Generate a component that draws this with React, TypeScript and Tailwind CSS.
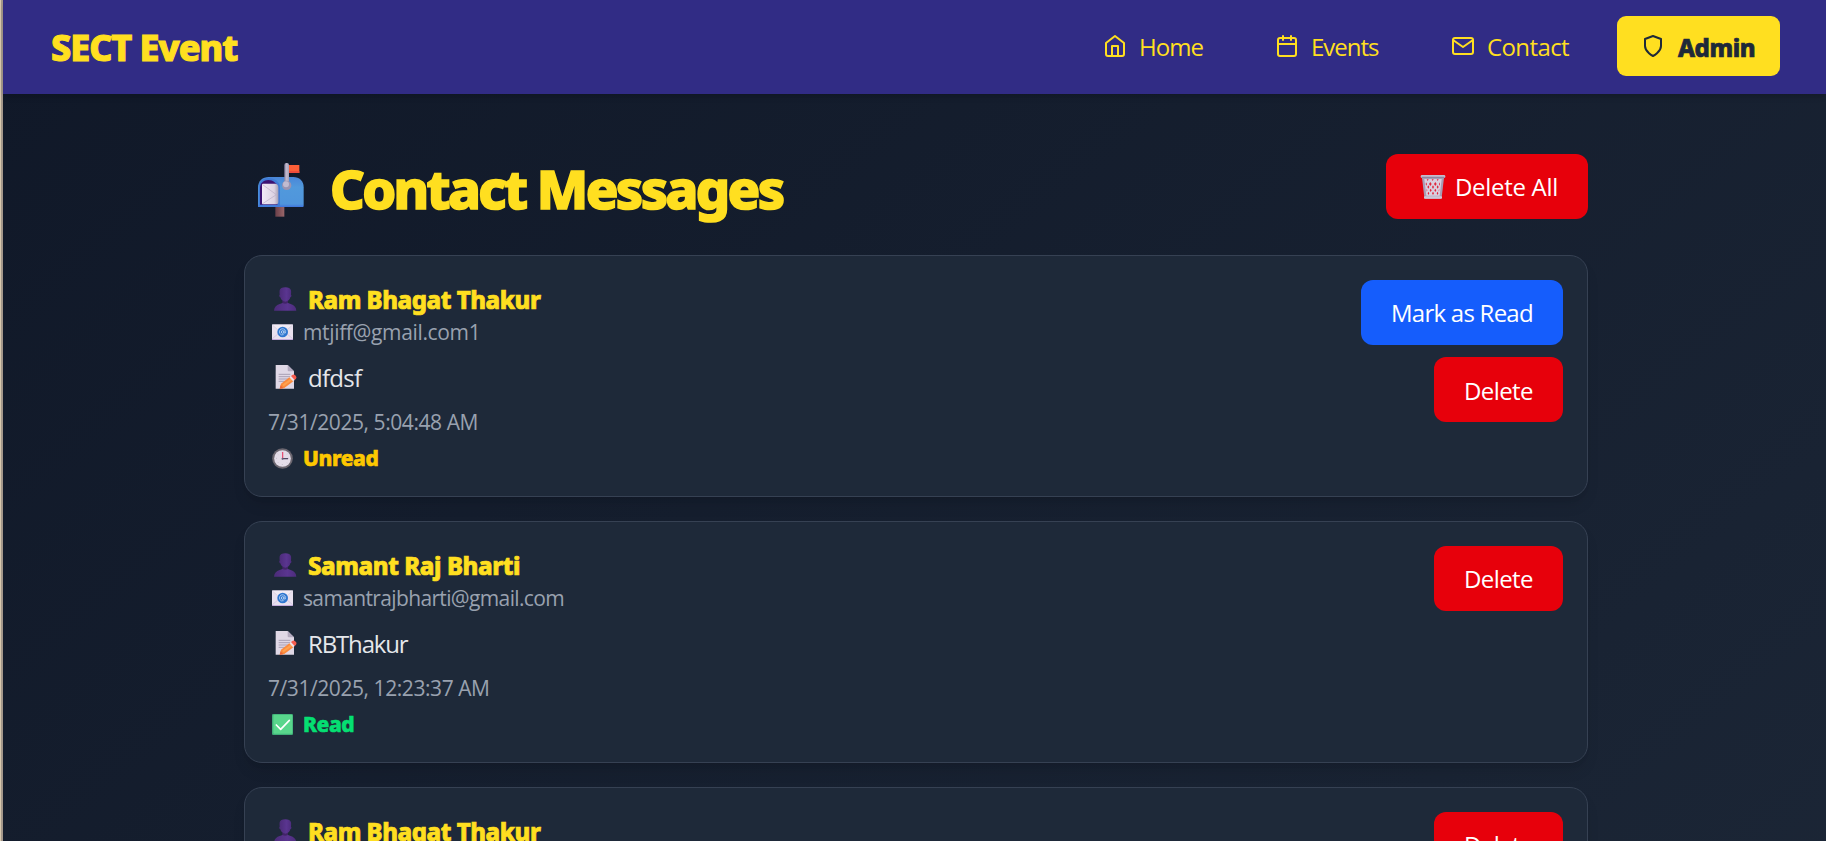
import type { ReactNode } from "react";

const stroke = {
  fill: "none",
  stroke: "currentColor",
  strokeWidth: 2,
  strokeLinecap: "round" as const,
  strokeLinejoin: "round" as const,
};

function HomeIcon() {
  return (
    <svg className="size-6 shrink-0" viewBox="0 0 24 24" {...stroke}>
      <path d="M3 9l9-7 9 7v11a2 2 0 0 1-2 2H5a2 2 0 0 1-2-2z" />
      <path d="M9 22V12h6v10" />
    </svg>
  );
}

function CalendarIcon() {
  return (
    <svg className="size-6 shrink-0" viewBox="0 0 24 24" {...stroke}>
      <rect x="3" y="4" width="18" height="18" rx="2" />
      <path d="M16 2v4M8 2v4M3 10h18" />
    </svg>
  );
}

function MailIcon() {
  return (
    <svg className="size-6 shrink-0" viewBox="0 0 24 24" {...stroke}>
      <path d="M4 4h16c1.1 0 2 .9 2 2v12c0 1.1-.9 2-2 2H4c-1.1 0-2-.9-2-2V6c0-1.1.9-2 2-2z" />
      <path d="M22 6l-10 7L2 6" />
    </svg>
  );
}

function ShieldIcon() {
  return (
    <svg className="size-6 shrink-0" viewBox="0 0 24 24" {...stroke}>
      <path d="M12 22s8-4 8-10V5l-8-3-8 3v7c0 6 8 10 8 10z" />
    </svg>
  );
}

function Mailbox() {
  return (
    <svg className="h-14 w-12 shrink-0" viewBox="21 21 144 168">
      <defs>
        <linearGradient id="mb-body" x1="0" y1="0" x2="0" y2="1">
          <stop offset="0" stopColor="#4a86d8" />
          <stop offset=".35" stopColor="#5199dc" />
          <stop offset=".9" stopColor="#4f95dc" />
          <stop offset="1" stopColor="#3f74dc" />
        </linearGradient>
        <linearGradient id="mb-post" x1="0" y1="0" x2="1" y2="0">
          <stop offset="0" stopColor="#6a3f49" />
          <stop offset="1" stopColor="#9a666a" />
        </linearGradient>
        <linearGradient id="mb-pole" x1="0" y1="0" x2="1" y2="0">
          <stop offset="0" stopColor="#8d86a5" />
          <stop offset=".5" stopColor="#c3bccf" />
          <stop offset="1" stopColor="#a79fb8" />
        </linearGradient>
        <linearGradient id="mb-env" x1="0" y1="0" x2="1" y2="0">
          <stop offset="0" stopColor="#f1e9f6" />
          <stop offset=".75" stopColor="#dcd2e2" />
          <stop offset="1" stopColor="#a79fb4" />
        </linearGradient>
      </defs>
      <rect x="76" y="152" width="27" height="33" fill="url(#mb-post)" />
      <path d="M24 156V98c0-20 14-32 32-32h74c18 0 31 12 31 30v57c0 2-1 3-3 3z" fill="url(#mb-body)" />
      <path d="M26 153V98c0-18 13-29 30-29s34 11 34 29v55z" fill="#3f7bd6" />
      <path d="M30 149V99c0-15 11-24 25-24s27 9 27 24v50z" fill="#3c1172" />
      <path d="M36 89q0-3 3-3h38q8 2 8 12v44q0 6-6 6H39q-3 0-3-3z" fill="url(#mb-env)" />
      <path d="M38 89l41 30-41 27" fill="none" stroke="#b9aec5" strokeWidth="2" />
      <rect x="114" y="30" width="34" height="24" fill="#fc5f38" />
      <rect x="114" y="48" width="34" height="6" fill="#ee4c3c" />
      <rect x="103" y="24" width="14" height="68" rx="6" fill="url(#mb-pole)" />
      <circle cx="110" cy="91" r="14" fill="#9a94b2" />
      <circle cx="108" cy="88" r="9" fill="#c1bbd0" />
    </svg>
  );
}

function Wastebasket() {
  return (
    <svg className="h-[25px] w-[26px] shrink-0" viewBox="0 0 78 75">
      <path d="M6 12h66l-7 58q-1 4-4 4H17q-3 0-4-4z" fill="#a79cb4" />
      <path d="M13 15h52l-6 50H19z" fill="#d9d0e0" />
      <g fill="#e0263c">
        <path d="M20 16l3 5 3-5zM35 16l3 5 3-5zM50 16l3 5 3-5z" />
        <path d="M18 25l3 5-2 5-2-4zM31 24l4 6-4 6-4-6zM46 24l4 6-4 6-4-6zM60 25l-3 5 2 5 1-2z" />
        <path d="M25 34l3 5-3 5-3-5zM39 34l3 5-3 6-3-6zM53 34l3 5-3 5-3-5z" />
        <path d="M32 44l3 5-3 5-3-5zM46 44l3 5-3 5-3-5zM20 44l2 5-2 4zM58 44l-2 5 1 4z" />
        <path d="M25 53l3 5-3 5-2-5zM39 53l3 5-3 5-3-5zM53 53l2 5-2 5-3-5z" />
      </g>
      <rect x="2" y="3" width="74" height="9" rx="4" fill="#c4bccd" />
      <rect x="4" y="8" width="70" height="4" rx="2" fill="#8f859f" />
      <rect x="12" y="67" width="54" height="7" rx="2" fill="#cfc6d6" />
    </svg>
  );
}

function Bust() {
  return (
    <svg className="h-6 w-6 shrink-0" viewBox="0 0 72 72">
      <defs>
        <linearGradient id="bust" x1="0" y1="0" x2="1" y2="0">
          <stop offset="0" stopColor="#4b2b78" />
          <stop offset=".6" stopColor="#5a3590" />
          <stop offset="1" stopColor="#4c2c7c" />
        </linearGradient>
      </defs>
      <path d="M28 40h17v13H28z" fill="#412468" />
      <path d="M3 71q1-15 17-20 5-2 8-3 8 5 17 0 4 1 8 3 16 5 17 20z" fill="url(#bust)" />
      <path d="M20 10q2-9 17-9 14 0 17 9 1 7 0 13 2 1 1 5-1 3-3 3-3 11-15 13-12-2-15-13-2 0-3-3-1-4 1-5-1-6 0-13z" fill="url(#bust)" />
    </svg>
  );
}

function EmailEmoji() {
  return (
    <svg className="h-4 w-[21px] shrink-0" viewBox="0 0 63 48">
      <rect x="0" y="1" width="63" height="46" rx="2" fill="#e9e1ef" />
      <path d="M1 44l24-20M62 44L38 24" stroke="#cdb9e3" strokeWidth="2" />
      <path d="M1 3l30 26L62 3" fill="#f1ebf4" stroke="#d6cbdc" strokeWidth="2" />
      <path d="M0 45h63v2H0z" fill="#cba8ea" />
      <circle cx="32" cy="24" r="16" fill="#2f77d0" />
      <circle cx="32" cy="24" r="4" fill="none" stroke="#c7dcf5" strokeWidth="2.5" />
      <path d="M36 20v6q1 3 4 1 2-5-1-9-5-6-12-3-7 5-4 13 4 7 12 4" fill="none" stroke="#c7dcf5" strokeWidth="2.2" />
    </svg>
  );
}

function Memo() {
  return (
    <svg className="h-6 w-[22px] shrink-0" viewBox="0 0 66 72">
      <path d="M2 0h36l19 19v52H2z" fill="#e0d8e6" />
      <path d="M38 0l19 19H41q-3 0-3-3z" fill="#b4aabf" />
      <path d="M11 28h35M11 35h35M11 42h28M11 49h22" stroke="#9d94aa" strokeWidth="2.5" />
      <path d="M14 71l4-15 27-21 11 13-28 21z" fill="#fb8a3c" />
      <path d="M22 59l27-20 4 5-27 20z" fill="#ffa24f" />
      <path d="M14 71l3-10 8 9z" fill="#e9683a" />
      <path d="M43 37l6-5 11 12-6 5z" fill="#f0dfe6" />
      <path d="M48 33l5-4q4-2 7 1l3 4q3 4 0 7l-4 4z" fill="#f75b4c" />
    </svg>
  );
}

function Clock() {
  return (
    <svg className="size-[21px] shrink-0" viewBox="0 0 63 63">
      <circle cx="31.500" cy="31.500" r="31" fill="#6c6770" />
      <circle cx="31.500" cy="31.500" r="25" fill="#e3dce8" />
      <path d="M31 12v3M31 48v3M12 31h3M48 31h3M17 18l2 2M45 44l2 2M17 45l2-2M45 19l2-2" stroke="#b9b2c0" strokeWidth="2" />
      <path d="M32 33V12" stroke="#e8456a" strokeWidth="3.500" />
      <path d="M30 32h18" stroke="#433b58" strokeWidth="3.500" />
      <circle cx="31.500" cy="32" r="3" fill="#6a5f7c" />
    </svg>
  );
}

function CheckMark() {
  return (
    <svg className="size-[21px] shrink-0" viewBox="0 0 63 63">
      <rect width="63" height="63" rx="4" fill="#3fae78" />
      <rect x="4" y="2" width="57" height="57" rx="3" fill="#59d68c" />
      <path d="M13 33l13 13 26-27" fill="none" stroke="#fff" strokeWidth="5" strokeLinecap="round" strokeLinejoin="round" />
    </svg>
  );
}

const heavy = "font-['Noto_Sans',sans-serif] font-extrabold [-webkit-text-stroke:0.03em_currentColor]";

function NavLink({ icon, active, children }: { icon: ReactNode; active?: boolean; children: ReactNode }) {
  return (
    <a
      className={
        active
          ? "flex h-[60px] items-center gap-3 rounded-[9px] bg-[#ffdf20] px-6 text-[#1e2939]"
          : "flex h-[60px] items-center gap-3 px-6 text-[#ffdf20]"
      }
    >
      {icon}
      {children}
    </a>
  );
}

type Message = {
  name: string;
  nameClass: string;
  read: boolean;
  body?: {
    email: string;
    emailClass: string;
    text: string;
    textClass: string;
    date: string;
  };
};

const messages: Message[] = [
  {
    name: "Ram Bhagat Thakur",
    nameClass: "tracking-[-0.47px]",
    read: false,
    body: {
      email: "mtjiff@gmail.com1",
      emailClass: "tracking-[-0.35px]",
      text: "dfdsf",
      textClass: "tracking-[-0.7px]",
      date: "7/31/2025, 5:04:48 AM",
    },
  },
  {
    name: "Samant Raj Bharti",
    nameClass: "tracking-[-0.42px]",
    read: true,
    body: {
      email: "samantrajbharti@gmail.com",
      emailClass: "tracking-[-0.64px]",
      text: "RBThakur",
      textClass: "tracking-[-1.15px]",
      date: "7/31/2025, 12:23:37 AM",
    },
  },
  { name: "Ram Bhagat Thakur", nameClass: "tracking-[-0.47px]", read: true },
];

function MessageCard({ m }: { m: Message }) {
  return (
    <article className="flex h-[242px] shrink-0 items-start justify-between rounded-[18px] border border-[#364153] bg-[#1e2939] p-6 shadow-lg">
      <div className="flex flex-col">
        <h2 className={`flex h-9 items-center text-[24px] text-[#ffdf20] ${heavy}`}>
          <span className="flex w-[39px] pt-0.5 pl-1"><Bust /></span>
          <span className={`h-9 whitespace-nowrap leading-[40px] ${m.nameClass}`}>{m.name}</span>
        </h2>
        {m.body && (
          <>
            <p className="flex h-[30px] items-center text-[21px] text-[#99a1af]">
              <span className="flex w-[34px] pt-0.5 pl-[3px]"><EmailEmoji /></span>
              <span className={`h-[30px] whitespace-nowrap leading-[32px] ${m.body.emailClass}`}>{m.body.email}</span>
            </p>
            <p className="mt-3 flex h-9 items-center text-[24px] text-[#e5e7eb]">
              <span className="flex w-[39px] pt-px pl-[6px]"><Memo /></span>
              <span className={`h-9 whitespace-nowrap leading-[39px] ${m.body.textClass}`}>{m.body.text}</span>
            </p>
            <p className="mt-3 -ml-px h-[30px] whitespace-nowrap text-[21px] leading-[33px] tracking-[-0.43px] text-[#99a1af]">
              {m.body.date}
            </p>
            <p className={`mt-1.5 flex h-[30px] items-center text-[21px] ${heavy} ${m.read ? "text-[#05df72]" : "text-[#fdc700]"}`}>
              <span className="flex w-[34px] pt-0.5 pl-[3px]">{m.read ? <CheckMark /> : <Clock />}</span>
              <span className="h-[30px] leading-[33px] tracking-[-0.4px]">{m.read ? "Read" : "Unread"}</span>
            </p>
          </>
        )}
      </div>
      <div className="flex flex-col items-end gap-3">
        {!m.read && (
          <button className="flex h-[65px] w-[202px] items-center rounded-xl bg-[#155dfc] pl-[30px] text-[24px] text-white">
            <span className="whitespace-nowrap leading-9 tracking-[-0.75px]">Mark as Read</span>
          </button>
        )}
        <button
          className={
            m.read
              ? "flex h-[65px] w-[129px] items-center rounded-xl bg-[#e7000b] pl-[30px] text-[24px] text-white"
              : "flex h-[65px] w-[129px] items-center rounded-xl bg-[#e7000b] pt-0.5 pl-[30px] text-[24px] text-white"
          }
        >
          <span className="leading-9 tracking-[-0.6px]">Delete</span>
        </button>
      </div>
    </article>
  );
}

export default function App() {
  return (
    <div className="flex h-[841px] overflow-hidden font-['Open_Sans',sans-serif]">
      <div className="w-[3px] shrink-0 border-l border-[#d9c9ae] bg-[#a3978a]" />
      <div className="flex h-[1500px] grow flex-col bg-linear-to-br from-[#101828] to-[#1e2939]">
        <header className="flex h-[94px] shrink-0 items-center justify-between bg-[#312c85] pr-[46px] pl-12 shadow-md">
          <div className={`pt-0.5 text-[36px] leading-[48px] tracking-[-1.05px] text-[#ffdf20] ${heavy}`}>SECT Event</div>
          <nav className="flex items-center gap-6 pb-0.5 text-[24px]">
            <NavLink icon={<HomeIcon />}>
              <span className="h-9 w-[64px] whitespace-nowrap leading-[38px] tracking-[-0.95px]">Home</span>
            </NavLink>
            <NavLink icon={<CalendarIcon />}>
              <span className="h-9 w-[68px] whitespace-nowrap leading-[38px] tracking-[-1px]">Events</span>
            </NavLink>
            <NavLink icon={<MailIcon />}>
              <span className="h-9 w-[82px] whitespace-nowrap leading-[38px] tracking-[-0.6px]">Contact</span>
            </NavLink>
            <NavLink icon={<ShieldIcon />} active>
              <span className={`h-9 w-[79px] whitespace-nowrap pl-px leading-[39px] tracking-[-0.4px] ${heavy}`}>Admin</span>
            </NavLink>
          </nav>
        </header>
        <main className="mt-[60px] ml-[241px] flex w-[1344px] flex-col">
          <div className="mb-9 flex h-[65px] items-start justify-between">
            <h1 className={`flex items-start pl-[13px] text-[54px] text-[#ffdf20] ${heavy}`}>
              <span className="flex w-[73px] pt-2"><Mailbox /></span>
              <span className="h-[65px] whitespace-nowrap leading-[69px] tracking-[-2.65px]">Contact Messages</span>
            </h1>
            <button className="flex h-[65px] w-[202px] items-center rounded-xl bg-[#e7000b] pl-[34px] text-[24px] text-white">
              <span className="flex w-[35px]"><Wastebasket /></span>
              <span className="whitespace-nowrap leading-9 tracking-[-0.3px]">Delete All</span>
            </button>
          </div>
          <div className="flex flex-col gap-6">
            {messages.map((m, i) => (
              <MessageCard key={i} m={m} />
            ))}
          </div>
        </main>
      </div>
    </div>
  );
}
